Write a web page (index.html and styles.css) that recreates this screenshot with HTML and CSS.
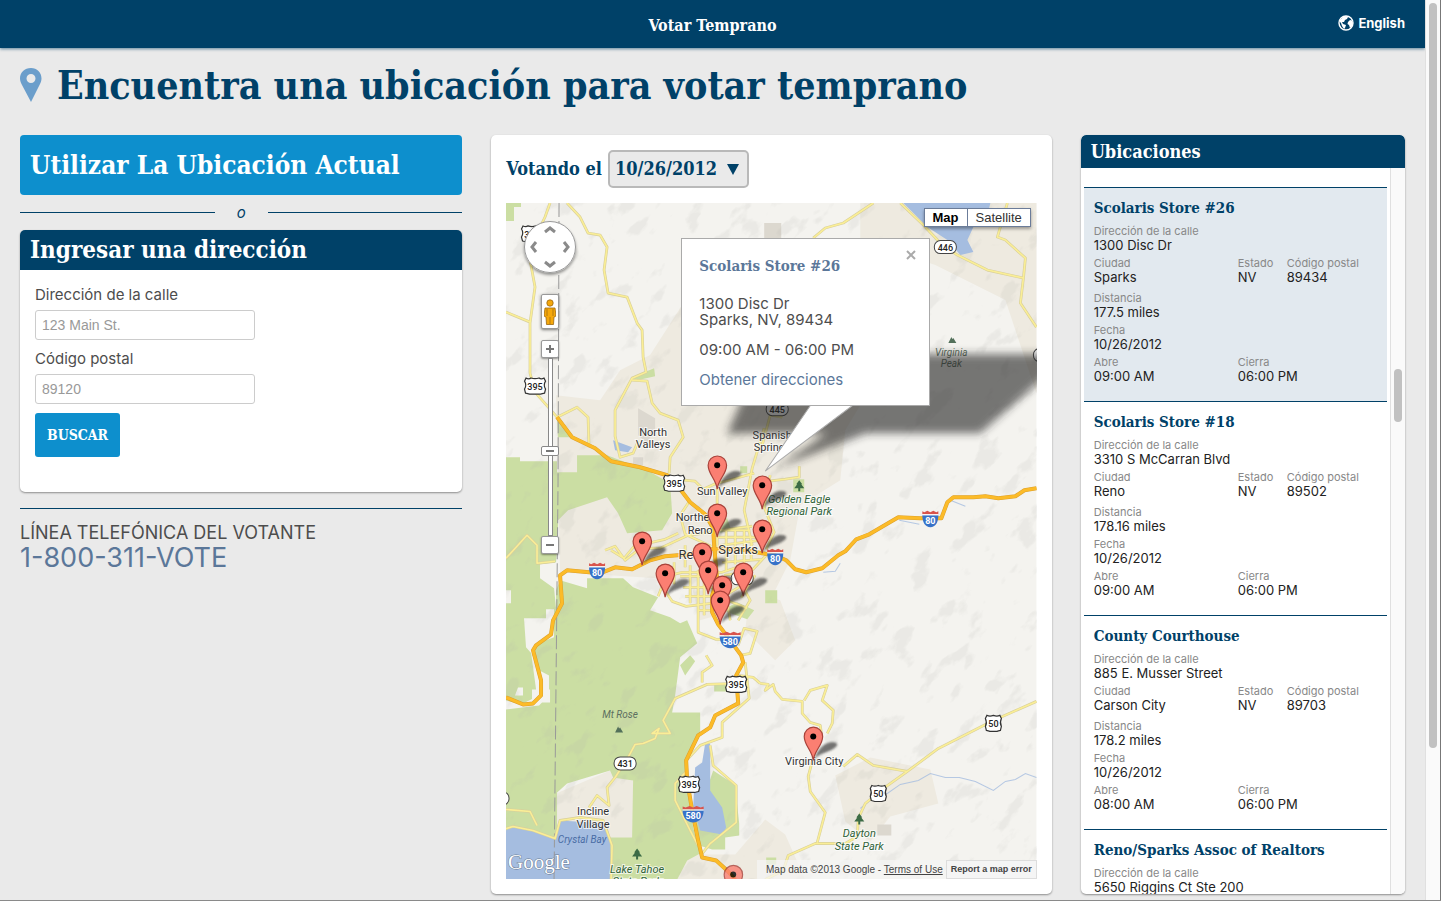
FILE: index.html
```html
<!DOCTYPE html>
<html lang="es">
<head>
<meta charset="utf-8">
<title>Votar Temprano</title>
<link rel="stylesheet" href="styles.css">
</head>
<body>
<div class="window">
<div class="page">
  <header class="topbar">
    <span class="topbar-title">Votar Temprano</span>
    <a class="language" href="#">
      <svg class="globe" viewBox="0 0 16 16" aria-hidden="true"><circle cx="8" cy="8" r="7" fill="#004168" stroke="#fff" stroke-width="1.4"/><path d="M2 5 5 2 8 1l2 1-1 2-2 1-1 2H4l1 2 3 1-1 3-1 1-2-3-1-3-2-2zM10 7l2-2 2 .5 1 2.5-1 3-2 2-1-3-1.500-1z" fill="#fff"/></svg>
      English
    </a>
  </header>

  <main class="content">
    <h1 class="headline">
      <svg class="headline-pin" viewBox="0 0 22 34" aria-hidden="true"><path fill="#6b9ecb" fill-rule="evenodd" d="M11 0C4.500 0 0 4.500 0 10.500c0 2.500 1 4.500 2 6.500l9 17 8.500-17c1-2 2-4 2-6.500C21.500 4.500 17 0 11 0zm0 6a4.500 4.500 0 1 1 0 9 4.500 4.500 0 0 1 0-9z"/></svg>
      Encuentra una ubicación para votar temprano
    </h1>

    <div class="columns">
      <section class="search">
        <button class="locate" type="button">Utilizar La Ubicación Actual</button>
        <div class="divider"><span>o</span></div>
        <form class="panel">
          <h2 class="panel-title">Ingresar una dirección</h2>
          <div class="panel-body">
            <label for="street">Dirección de la calle</label>
            <input id="street" type="text" placeholder="123 Main St.">
            <label for="zip">Código postal</label>
            <input id="zip" type="text" placeholder="89120">
            <button class="submit" type="button">BUSCAR</button>
          </div>
        </form>
        <div class="hotline">
          <p>LÍNEA TELEFÓNICA DEL VOTANTE</p>
          <a href="tel:18003118683">1-800-311-VOTE</a>
        </div>
      </section>

      <section class="map-card">
        <div class="date-row">
          <label for="date">Votando el</label>
          <div class="date-box">
            <select id="date"><option>10/26/2012</option></select>
            <svg class="date-arrow" viewBox="0 0 12 12" aria-hidden="true"><path d="M0 1h12L6 12z" fill="#004168"/></svg>
          </div>
        </div>

        <div class="map">
          <svg class="map-art" viewBox="506 203 530 676" preserveAspectRatio="xMinYMin slice" role="img" aria-label="Reno, NV">
            <defs>
              <filter id="hills" x="0" y="0" width="100%" height="100%">
                <feTurbulence type="fractalNoise" baseFrequency=".03 .055" numOctaves="4" seed="8"/>
                <feColorMatrix values="0 0 0 0 .45  0 0 0 0 .45  0 0 0 0 .42  9 0 0 0 -5.300"/>
              </filter>
              <filter id="soft" x="-20%" y="-30%" width="140%" height="160%"><feGaussianBlur stdDeviation="4"/></filter>
              <filter id="softpin" x="-50%" y="-50%" width="200%" height="200%"><feGaussianBlur stdDeviation="1"/></filter>
              <g id="pin">
                <path d="M1 23C4 14 9 8 16 6c8-1 10 2 6 5-4 4-13 5-18 9z" fill="#222" opacity=".6" filter="url(#softpin)"/>
                <path d="M0 24C-1 14-9 9-9 0a9.200 9.200 0 0 1 18.400 0C9.400 9 1 14 0 24z" fill="#fb7f72" stroke="#a8423a" stroke-width="1.200"/>
                <circle r="3" fill="#000"/>
              </g>
              <g id="us"><path d="M-9-8q3 1.500 5-.2 4 1.500 8 0 2 1.700 5 .2l1.500 3q-2.500 4 0 8l-1 4q-2.500.5-4 1H-5.500q-1.500-.5-4-1l-1-4q2.500-4 0-8z" fill="#fff" stroke="#333" stroke-width="1.200"/></g>
              <g id="us2"><path d="M-6.500-8q3 1.500 6.500 0 3.500 1.500 6.500 0l1.500 3q-2 4 0 8l-1 4q-2 .5-3.500 1h-7q-1.500-.5-3.500-1l-1-4q2-4 0-8z" fill="#fff" stroke="#333" stroke-width="1.200"/></g>
              <rect id="state" x="-11" y="-6.500" width="22" height="13" rx="6" fill="#fff" stroke="#444"/>
              <g id="inter"><path d="M-8-4H8C8 3 5 8 0 8S-8 3-8-4z" fill="#3772c8"/><path d="M-8-8l2 1 3-1.500L0-7l3-1.500L6-7l2-1v3H-8z" fill="#d9544c"/><path d="M-8-4.500H8" stroke="#fff"/></g>
              <g id="inter3"><path d="M-10.500-4h21C10.500 3 6 8 0 8s-10.500-5-10.500-12z" fill="#3772c8"/><path d="M-10.500-8l3 1 4-1.500L0-7l3.500-1.500L7.500-7l3-1v3h-21z" fill="#d9544c"/><path d="M-10.500-4.500h21" stroke="#fff"/></g>
              <path id="tree" d="M0-6l3 4H2l3 4H1v3h-2V2h-4l3-4h-1z" fill="#3c6b45"/>
              <path id="peak" d="M-4 3-1-3l1 2 1-1 3 5z" fill="#53705a"/>
              <g id="roads">
                <path d="M550 203l-5 14-12 25-3 18 5 27-5 36v50l5 19 22 25M567 203l13 14 8 16 12 2 7 12-3 23 4 23 19 4 10 26 5 7 1 27 3 15-14 6-17 32v26l5 21 13-4 5-12M632 380l15 1 5 22 8 10 18 7 5 17-13 20-1 16M506 312l24 10M557 417l20-10 11 10 1 30M873 203l-30 20-18 5-12 10M900 203l23 22 17 18 17 12 30 15 36 8M1007 203l-10 34 8 3 20 18-2 20-3 25 16 24"/>
                <path d="M1036 701l-43 19-55 28-31 23-21 15-21 17-7 15-1 18-12 7h-30l-27 12-5 15-18 9M907 771l-34-6-16-11-14 12M760 683l8 1-3 6 8-6 2 7 7 8 20 2v12l8 9 10 3 1 7-8 25-5 19 2 15 15 21-8 30M804 700l6-10 17-5-5 15 11 10-1 13-5 10"/>
                <path d="M738 683l-31 1-32 14-12 22 7 13h-18l7-5-4 10-12 5-8 1-7 13-13 20-8 10 2 18-12-10-8 12M506 828l7-2 20 4 22 8 5-18 20-3 23 3 9 25-1 34M506 809l24 2 7 14M745 662l4 36-27 24v15l-22 8-13 14M710 745l3 20 23 20v37l-26 21-8 10M687 770l-12 13v17l15 30 8 15M738 675l15 2 7 6M740 655l10-2 7-22-13-3-6 17"/>
                <path d="M506 558l21-23 10 10v18l18-2M684 480l11 1 8 8 11-5 40-11M717 488v65M762 445l8-30 12 2M752 545l-8-35 8-42 12-40M760 482l25-3 14-2v-11M770 475l-6 32 10 25-8 17M690 500l-10 15 5 19 26 12M605 550l10-4 10 14 15-12h20l28-13 22-3M611 550l13 8 10-12 31-7 13-6M658 596l8-20 16-4h40l24-8M662 586l10 15 14 5 25-3M698 570v62l18 7h18"/>
                <path d="M715 537h45M720 545l40-5M722 562l40-3M724 575l27-4 15-16M680 576h33M683 587h30M735 530v34M744 530v45M751 540v20M690 565v38M704 580v35M722 597l20-12 8 15-12 20M730 620l-3-20 20 8M706 655l6 10-10 7v10M726 530v40M712 530h38M674 562v22M718 530l34-4M685 596h28M698 610h14M685 545v22M755 575l-14 22"/>
              </g>
              <g id="freeways">
                <path d="M557 417l15 20 23 11 16 13 29 6 27 8 10 10 13 17 15 12 8 14 1 17 3 35-5 15v17l6 12 12 16 11 15 2 7-7 13 2 28-23 12-5 12-12 8-12 25 1 20 5 30 6 30 4 17 14 3 11 10 8 9"/>
                <path d="M506 697l17 7 10-1 8-8v-15l-8-30 3-5 15-11 2-14 9-17-2-28 7-5 33 3 15-6 17 2 18-9 15-4 25-2 14-5h36l22 4 13 2 11 5 9 9 11 3 16-4 16-13 7-4 11-12 13-5 29-17 22 1h21l6-16 6-5h20l12-1 13 2 17-2 9-6 12-2"/>
              </g>
            </defs>
            <rect x="506" y="203" width="530" height="676" fill="#f4f3ef"/>
            <g fill="#eeeae0">
              <path d="M556 395l44 5 20-30 30-15 32-50v100h178l-15 25-5 50-40 25-10 55-20 40-70 20-10-40-130-8z"/>
              <path d="M860 203h176v190l-31-93-70-35-75-25z"/>
              <path d="M835 775l35-18 60 12 8 34-48 13-20 25-25-20zM750 590l30 10 15 40-20 20-30-30zM556 793l54-23 23 10v60h-30l-47-15zM650 879l30-25 55 0 30-35 20 15 20 45z"/>
            </g>
            <g fill="#dcd8cf"><path d="M764 223h17v16h-17zM638 408l17 10v10l-8 15-9-8zM877 824h14v11h-14zM633 457h10v8h-10z"/></g>
            <g fill="#cbdea3">
              <path d="M506 203h15v4h-7v14h-8z"/>
              <path d="M506 457h14v4h37v11h20v-17h30l21 8 19 7 23 13 2 30-10 17-35 3-9-20-11-16-39 13-10 10v17l-2 25-16 2v14l14 10 3 30v215l-3 27-22-8-20-4-7 3z"/>
              <path d="M560 580l27 8v-10h36l10 9 25 10-8 13 20 7 10 6 7-3 10 23-17 14-5 38-3 17h28v20l-12 24-2 10 7 61 7 26-13 7-10 19h-67v-42h22l1-57-20-3-3-7-43 13-11 10V590z"/>
              <path d="M713 770l23 15v10l3 28v12l-14 2v12h-13l-13-4-3-25zM557 417l14 20h-13zM632 377l22-9 1 8-18 4zM740 466h7v7h-7zM765 590h12v13h-12zM722 610l15-8 17 8-7 9zM793 479h11v13h-11zM766 857h10v7h-10zM715 520l12-2 4 12-13 3zM714 683h13v8h-13zM680 665l10-10 5 6-10 14z"/>
            </g>
            <path d="M506 590h5v13h-5zM524 618h22v-9h8v28l-16 6-5 12-7-8zM531 652l8 18 10 5v20l-10 10-33 4v-9l15 4 16-8zM532 689h18v13h-18zM515 695h8v-8h-5z" fill="#f4f3ef"/>
            <g transform="rotate(-48 771 541)"><rect x="330" y="100" width="880" height="880" filter="url(#hills)" opacity=".14"/></g>
            <g fill="#a5bde0">
              <path d="M903 203h87l-2 8-15 16-6 13 6 12-13 3-13-15-20-13zM613 440l19 7-4 5-13-2zM705 743h5v47l12 17 4 20-4 7-22-4-7-23 2-40 7-5zM506 830l7-4 20 4 22 8 5-18 47 3 3 20 2 36H506z"/>
            </g>
            <path d="M559 203l-1 280-4 396" fill="none" stroke="#999" stroke-dasharray="14 4"/>
            <path d="M860 808l15-12 12-3 13-9 18-4 12-7 15 4 14 0 16 4 18 9 12-9 10-2 10-6 11 4M899 520l20 4M950 500l15 6M823 572l12-1 5-8" fill="none" stroke="#a5bde0" stroke-width="1" opacity=".8"/>
            <g fill="none" stroke-linejoin="round">
              <use href="#roads" stroke="#d8cf9a" stroke-width="2.800"/>
              <use href="#roads" stroke="#faee96" stroke-width="1.600"/>
              <use href="#freeways" stroke="#dca02c" stroke-width="4"/>
              <use href="#freeways" stroke="#fcbb28" stroke-width="3"/>
            </g>
            <g class="shields">
              <use href="#us" x="532" y="234"/><text x="532" y="238">395</text>
              <use href="#us" x="535" y="386"/><text x="535" y="390">395</text>
              <use href="#us" x="674" y="483"/><text x="674" y="487">395</text>
              <use href="#us" x="736" y="684"/><text x="736" y="688">395</text>
              <use href="#us" x="689" y="784"/><text x="689" y="788">395</text>
              <use href="#us2" x="993" y="723"/><text x="993" y="727">50</text>
              <use href="#us2" x="878" y="793"/><text x="878" y="797">50</text>
              <use href="#state" x="945" y="247"/><text x="945" y="251">446</text>
              <use href="#state" x="777" y="409"/><text x="777" y="413">445</text>
              <use href="#state" x="625" y="763"/><text x="625" y="767">431</text>
              <use href="#state" x="742" y="578"/>
              <use href="#state" x="1044" y="355"/>
              <use href="#state" x="498" y="798"/>
            </g>
            <g class="interstates">
              <use href="#inter" x="597" y="571"/><text x="597" y="576">80</text>
              <use href="#inter" x="775" y="557"/><text x="775" y="562">80</text>
              <use href="#inter" x="930" y="519"/><text x="930" y="524">80</text>
              <use href="#inter3" x="730" y="640"/><text x="730" y="645">580</text>
              <use href="#inter3" x="693" y="814"/><text x="693" y="819">580</text>
            </g>
            <use href="#tree" x="799" y="486"/><use href="#tree" x="859" y="819"/><use href="#tree" x="637" y="854"/>
            <use href="#peak" x="952" y="340"/><use href="#peak" x="619" y="729"/>
            <g class="places">
              <text x="653" y="436">North</text><text x="653" y="448">Valleys</text>
              <text x="772" y="439">Spanish</text><text x="772" y="451">Springs</text>
              <text x="722" y="495">Sun Valley</text>
              <text x="700" y="521">Northeast</text><text x="700" y="534">Reno</text>
              <text x="814" y="765">Virginia City</text>
              <text x="593" y="815">Incline</text><text x="593" y="828">Village</text>
              <text class="city" x="693" y="559">Reno</text><text class="city" x="738" y="554">Sparks</text>
            </g>
            <g class="parks">
              <text x="799" y="503">Golden Eagle</text><text x="799" y="515">Regional Park</text>
              <text x="859" y="837">Dayton</text><text x="859" y="849">State Park</text>
              <text x="637" y="872">Lake Tahoe</text><text x="637" y="884">State Park</text>
              <text class="peak" x="951" y="356">Virginia</text><text class="peak" x="951" y="367">Peak</text>
              <text class="peak" x="620" y="718">Mt Rose</text>
              <text class="water" x="582" y="843">Crystal Bay</text>
            </g>
            <path d="M745 392l180-38h145l-90 79H866l-90 35 50-35H727z" fill="#222" opacity=".6" filter="url(#soft)"/>
            <use href="#pin" x="717" y="465"/><use href="#pin" x="762" y="485"/><use href="#pin" x="717" y="513"/>
            <use href="#pin" x="762" y="529"/><use href="#pin" x="642" y="541"/><use href="#pin" x="702" y="552"/>
            <use href="#pin" x="708" y="570"/><use href="#pin" x="743" y="572"/><use href="#pin" x="665" y="573"/>
            <use href="#pin" x="722" y="585"/><use href="#pin" x="720" y="600"/><use href="#pin" x="813" y="736"/>
            <use href="#pin" x="733" y="874" opacity=".8"/>
            <path d="M811 404l-46 67 89-67z" fill="#fff" stroke="#aaa"/>
            <text class="brand" x="508" y="868">Google</text>
          </svg>

          <div class="pan" role="group" aria-label="Pan">
            <svg viewBox="0 0 52 52" aria-hidden="true"><circle cx="26" cy="26" r="25.500" fill="#fff" stroke="#999"/><path d="M21 11l5-4 5 4M21 41l5 4 5-4M12 21l-4 5 4 5M40 21l4 5-4 5" fill="none" stroke="#8a8a8a" stroke-width="3"/></svg>
          </div>
          <button class="pegman" type="button" aria-label="Street View">
            <svg viewBox="0 0 12 26" aria-hidden="true"><g fill="#f5a80b" stroke="#9c6710" stroke-width=".8"><path d="M1 9h10l1 8-2 1-.5 7.500h-7L2 18l-2-1z"/><circle cx="6" cy="4" r="3.200"/></g><path d="M6 18v7M3 10v7M9 10v7" stroke="#9c6710" stroke-width=".7"/></svg>
          </button>
          <div class="zoom">
            <button type="button" aria-label="Zoom in"><svg viewBox="0 0 10 10"><path d="M5 1v8M1 5h8" stroke="#777" stroke-width="2"/></svg></button>
            <div class="zoom-track"><span class="zoom-thumb"></span></div>
            <button type="button" aria-label="Zoom out"><svg viewBox="0 0 10 10"><path d="M1 5h8" stroke="#777" stroke-width="2"/></svg></button>
          </div>

          <div class="map-types">
            <button class="active" type="button">Map</button><button type="button">Satellite</button>
          </div>

          <div class="info">
            <button class="info-close" type="button" aria-label="Cerrar"><svg viewBox="0 0 10 10"><path d="M1 1l8 8M9 1l-8 8" stroke="#aaa" stroke-width="2"/></svg></button>
            <h3>Scolaris Store #26</h3>
            <p>1300 Disc Dr<br>Sparks, NV, 89434</p>
            <p>09:00 AM - 06:00 PM</p>
            <a href="#">Obtener direcciones</a>
          </div>

          <div class="credits">
            <span>Map data ©2013 Google - <a href="#">Terms of Use</a></span>
            <a class="report" href="#">Report a map error</a>
          </div>
        </div>
      </section>

      <section class="places-card">
        <h2 class="panel-title compact">Ubicaciones</h2>
        <div class="places-body">
          <div class="list">
            <article class="place selected">
              <h3>Scolaris Store #26</h3>
              <dl>
                <div class="wide"><dt>Dirección de la calle</dt><dd>1300 Disc Dr</dd></div>
                <div><dt>Ciudad</dt><dd>Sparks</dd></div>
                <div><dt>Estado</dt><dd>NV</dd></div>
                <div><dt>Código postal</dt><dd>89434</dd></div>
                <div class="wide distance"><dt>Distancia</dt><dd>177.5 miles</dd></div>
                <div class="wide"><dt>Fecha</dt><dd>10/26/2012</dd></div>
                <div><dt>Abre</dt><dd>09:00 AM</dd></div>
                <div class="rest"><dt>Cierra</dt><dd>06:00 PM</dd></div>
              </dl>
            </article>
            <article class="place">
              <h3>Scolaris Store #18</h3>
              <dl>
                <div class="wide"><dt>Dirección de la calle</dt><dd>3310 S McCarran Blvd</dd></div>
                <div><dt>Ciudad</dt><dd>Reno</dd></div>
                <div><dt>Estado</dt><dd>NV</dd></div>
                <div><dt>Código postal</dt><dd>89502</dd></div>
                <div class="wide distance"><dt>Distancia</dt><dd>178.16 miles</dd></div>
                <div class="wide"><dt>Fecha</dt><dd>10/26/2012</dd></div>
                <div><dt>Abre</dt><dd>09:00 AM</dd></div>
                <div class="rest"><dt>Cierra</dt><dd>06:00 PM</dd></div>
              </dl>
            </article>
            <article class="place">
              <h3>County Courthouse</h3>
              <dl>
                <div class="wide"><dt>Dirección de la calle</dt><dd>885 E. Musser Street</dd></div>
                <div><dt>Ciudad</dt><dd>Carson City</dd></div>
                <div><dt>Estado</dt><dd>NV</dd></div>
                <div><dt>Código postal</dt><dd>89703</dd></div>
                <div class="wide distance"><dt>Distancia</dt><dd>178.2 miles</dd></div>
                <div class="wide"><dt>Fecha</dt><dd>10/26/2012</dd></div>
                <div><dt>Abre</dt><dd>08:00 AM</dd></div>
                <div class="rest"><dt>Cierra</dt><dd>06:00 PM</dd></div>
              </dl>
            </article>
            <article class="place">
              <h3>Reno/Sparks Assoc of Realtors</h3>
              <dl>
                <div class="wide"><dt>Dirección de la calle</dt><dd>5650 Riggins Ct Ste 200</dd></div>
              </dl>
            </article>
          </div>
          <div class="rail" aria-hidden="true"><span class="rail-thumb list-thumb"></span></div>
        </div>
      </section>
    </div>
  </main>
</div>
<div class="rail page-rail" aria-hidden="true"><span class="rail-thumb page-thumb"></span></div>
</div>
</body>
</html>
```
FILE: styles.css
```css
* { box-sizing: border-box; }

:root {
  --navy: #004168;
  --blue: #0d8fcd;
  --slate: #5b7799;
  --slab: "DejaVu Serif Condensed", "DejaVu Serif", serif;
  --sans: Inter, "Open Sans", sans-serif;
}

body {
  margin: 0;
  background: #eaeaea;
  color: #4d4d4d;
  font: 15px/20px var(--sans);
}

h1, h2, h3, p, dl, dd { margin: 0; }
button { font: inherit; cursor: pointer; }
a { color: var(--slate); text-decoration: none; }

.window {
  display: flex;
  height: 100vh;
  overflow: hidden;
  border-bottom: 1px solid #8a8a8a;
}

.page {
  flex: 1;
  min-width: 0;
  display: flex;
  flex-direction: column;
}

.topbar {
  display: grid;
  grid-template-columns: 1fr auto 1fr;
  align-items: center;
  height: 48px;
  padding: 0 20px 2px;
  background: var(--navy);
  color: #fff;
  box-shadow: 0 1px 3px #00416899;
}
.topbar-title {
  grid-column: 2;
  padding-top: 5px;
  font: bold 16px/20px var(--slab);
}
.language {
  justify-self: end;
  display: flex;
  align-items: center;
  gap: 4px;
  color: #fff;
  font-size: 13px;
  font-weight: 700;
}
.globe { width: 16px; height: 16px; }

.content {
  flex: 1;
  min-height: 0;
  display: flex;
  flex-direction: column;
  padding: 12px 20px 6px;
}

.headline {
  display: flex;
  align-items: center;
  gap: 15px;
  height: 50px;
  color: var(--navy);
  font: bold 39px/50px var(--slab);
  white-space: nowrap;
}
.headline-pin { width: 22px; height: 34px; }

.columns {
  flex: 1;
  min-height: 0;
  margin-top: 25px;
  display: grid;
  grid-template-columns: minmax(0, 442fr) minmax(0, 560fr) minmax(0, 324fr);
  column-gap: 29px;
}

.locate {
  display: block;
  width: 100%;
  height: 60px;
  padding: 0 10px;
  border: 0;
  border-radius: 4px;
  background: var(--blue);
  color: #fff;
  font: bold 26px/60px var(--slab);
  text-align: left;
}

.divider {
  display: flex;
  align-items: center;
  gap: 22px;
  height: 35px;
  color: var(--navy);
  font-style: italic;
}
.divider::before, .divider::after {
  content: "";
  flex: 1;
  border-top: 1px solid var(--navy);
}

.panel, .map-card, .places-card {
  background: #fff;
  border-radius: 5px;
  box-shadow: 0 1px 2px #00000066;
}
.panel-title {
  padding: 0 10px;
  border-radius: 5px 5px 0 0;
  background: var(--navy);
  color: #fff;
  font: bold 24px/40px var(--slab);
}
.panel-title.compact { font-size: 18px; line-height: 33px; }

.panel-body {
  display: flex;
  flex-direction: column;
  align-items: flex-start;
  padding: 15px 15px 35px;
}
.panel-body input {
  width: 220px;
  height: 30px;
  margin: 5px 0 9px;
  padding: 4px 6px;
  border: 1px solid #ccc;
  border-radius: 3px;
  background: #fff;
  font: 14px/20px "Liberation Sans", Arial, sans-serif;
}
.panel-body input::placeholder { color: #999; }
.submit {
  height: 44px;
  padding: 0 12px;
  border: 0;
  border-radius: 3px;
  background: var(--blue);
  color: #fff;
  font: bold 14px/44px var(--slab);
}

.hotline {
  margin-top: 16px;
  padding-top: 14px;
  border-top: 1px solid var(--navy);
}
.hotline p { font-size: 18px; }
.hotline a { display: block; font-size: 27px; line-height: 30px; }

.map-card {
  display: flex;
  flex-direction: column;
  padding: 15px;
}
.date-row {
  display: flex;
  align-items: center;
  gap: 6px;
  margin-bottom: 15px;
  color: var(--navy);
  font: bold 18px/38px var(--slab);
}
.date-box { position: relative; }
.date-box select {
  display: block;
  appearance: none;
  width: 141px;
  height: 38px;
  padding: 0 5px;
  border: 2px solid #b9b9b9;
  border-radius: 5px;
  background: #eaeaea;
  color: var(--navy);
  font: bold 18px/34px var(--slab);
}
.date-arrow {
  position: absolute;
  top: 13px;
  right: 10px;
  width: 12px;
  height: 12px;
  pointer-events: none;
}

.map {
  position: relative;
  flex: 1;
  min-height: 0;
  overflow: hidden;
  font-family: "Liberation Sans", Arial, sans-serif;
}
.map-art {
  position: absolute;
  inset: 0;
  width: 100%;
  height: 100%;
}
.map-art text { text-anchor: middle; font-family: Roboto, sans-serif; }
.shields text { font-size: 9px; font-weight: 500; fill: #222; }
.interstates text { font-size: 9px; font-weight: 700; fill: #fff; }
.places text, .parks text {
  font-size: 11px;
  fill: #333;
  stroke: #ffffffb3;
  stroke-width: 2px;
  paint-order: stroke;
}
.places .city { font-size: 13px; }
.parks text { font-style: italic; fill: #2f6238; }
.parks .peak { font-size: 10px; fill: #5c6f60; stroke: none; }
.parks .water { font-size: 10px; fill: #4a6da5; stroke: none; }
.map-art .brand {
  text-anchor: start;
  font-family: "Liberation Serif", serif;
  font-size: 21px;
  fill: #fff;
  stroke: #6b7c94;
  stroke-width: 1px;
  paint-order: stroke;
}

.pan {
  position: absolute;
  top: 18px;
  left: 18px;
  width: 52px;
  height: 52px;
  border-radius: 50%;
  box-shadow: 0 2px 3px #00000066;
}
.pan svg, .zoom svg, .info svg { display: block; width: 100%; height: 100%; }

.pegman {
  position: absolute;
  top: 91px;
  left: 35px;
  display: grid;
  place-items: center;
  width: 18px;
  height: 35px;
  padding: 0;
  border: 1px solid #999;
  border-radius: 2px;
  background: #fff;
  box-shadow: 0 1px 3px #00000080;
}
.pegman svg { width: 12px; height: 26px; }

.zoom {
  position: absolute;
  top: 137px;
  left: 35px;
  display: flex;
  flex-direction: column;
  align-items: center;
  width: 18px;
}
.zoom button {
  width: 18px;
  height: 18px;
  padding: 3px;
  border: 1px solid #999;
  border-radius: 2px;
  background: #fff;
  box-shadow: 0 1px 2px #00000066;
}
.zoom-track {
  position: relative;
  width: 5px;
  height: 178px;
  border: 1px solid #888;
  background: #fff;
}
.zoom-thumb {
  position: absolute;
  top: 87px;
  left: -8px;
  width: 18px;
  height: 10px;
  border: 1px solid #888;
  border-radius: 2px;
  background: linear-gradient(#777, #777) center / 8px 2px no-repeat #fff;
}

.map-types {
  position: absolute;
  top: 5px;
  right: 6px;
  display: flex;
  box-shadow: 0 2px 3px #00000059;
}
.map-types button {
  height: 19px;
  padding: 0 8px;
  border: 1px solid #6b7c99;
  background: #fff;
  color: #333;
  font-size: 13px;
  line-height: 17px;
}
.map-types .active { border-right: 0; color: #000; font-weight: 700; }

.info {
  position: absolute;
  top: 35px;
  left: 175px;
  width: 249px;
  padding: 17px;
  border: 1px solid #aaa;
  background: #fff;
  font: 15px/16px var(--sans);
}
.info h3 { margin-bottom: 20px; color: var(--slate); font: bold 15px/20px var(--slab); }
.info p { margin-bottom: 14px; }
.info a { display: block; }
.info-close {
  position: absolute;
  top: 11px;
  right: 13px;
  width: 10px;
  height: 10px;
  padding: 0;
  border: 0;
  background: none;
}

.credits {
  position: absolute;
  right: 0;
  bottom: 0;
  display: flex;
  gap: 3px;
  padding-left: 9px;
  background: #f5f5f5b3;
  color: #444;
  font-size: 10px;
  line-height: 19px;
}
.credits a { color: #444; text-decoration: underline; }
.credits .report {
  padding: 0 4px;
  border: 1px solid #ddd;
  background: #f5f5f5;
  font-weight: 700;
  font-size: 9px;
  line-height: 17px;
  text-decoration: none;
}

.places-card {
  display: flex;
  flex-direction: column;
  min-height: 0;
  overflow: hidden;
}
.places-body { flex: 1; min-height: 0; display: flex; }
.list {
  flex: 1;
  min-width: 0;
  overflow: hidden;
  padding: 19px 3px 0;
}
.place {
  padding: 10px 10px 18px;
  border-top: 1px solid var(--navy);
}
.place.selected { background: #e2e9ef; }
.place h3 {
  margin-bottom: 7px;
  color: var(--navy);
  font: bold 15px/20px var(--slab);
  white-space: nowrap;
}
.place dl {
  display: grid;
  grid-template-columns: 144px 49px 1fr;
  row-gap: 5px;
}
.place .wide { grid-column: 1 / -1; }
.place .rest { grid-column: 2 / -1; }
.place .distance { padding-top: 3px; }
.place dt { color: #888; font-size: 11px; line-height: 13px; white-space: nowrap; }
.place dd { color: #222; font-size: 13px; line-height: 14px; }

.rail {
  position: relative;
  width: 15px;
  border-left: 1px solid #e0e0e0;
  background: #fafafa;
}
.rail-thumb {
  position: absolute;
  left: 3px;
  width: 8px;
  border-radius: 4px;
  background: #c1c1c1;
}
.list-thumb { top: 201px; height: 53px; }
.page-rail { width: 16px; border-right: 1px solid #777; }
.page-thumb { top: 3px; height: 745px; }
```
